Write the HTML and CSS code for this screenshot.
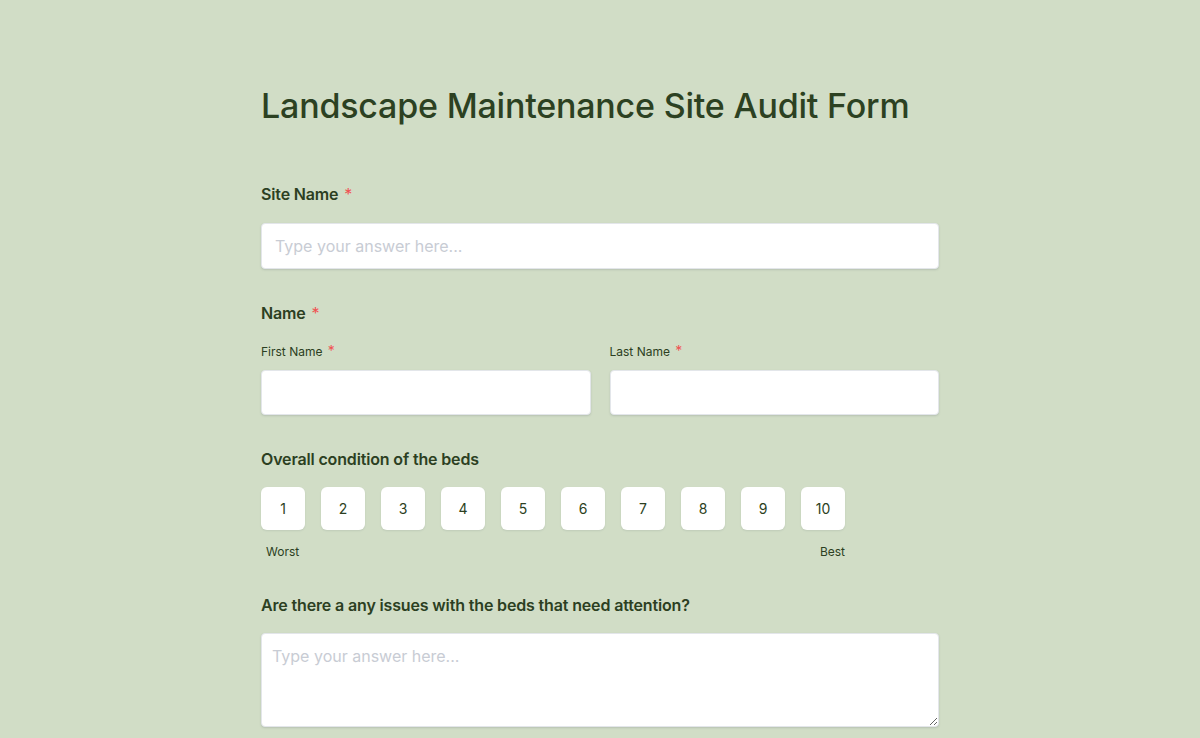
FILE: index.html
```html
<!DOCTYPE html>
<html>
<head>
<meta charset="utf-8">
<link rel="stylesheet" href="styles.css">
</head>
<body>
<main class="form">
  <h1 class="title">Landscape Maintenance Site Audit Form</h1>

  <section class="field">
    <label class="label">Site Name <span class="req">*</span></label>
    <input class="input" type="text" placeholder="Type your answer here...">
  </section>

  <section class="field">
    <label class="label">Name <span class="req">*</span></label>
    <div class="name-row">
      <div class="sub">
        <label class="sublabel">First Name <span class="req">*</span></label>
        <input class="input" type="text">
      </div>
      <div class="sub">
        <label class="sublabel">Last Name <span class="req">*</span></label>
        <input class="input" type="text">
      </div>
    </div>
  </section>

  <section class="field rating-field">
    <label class="label">Overall condition of the beds</label>
    <div class="scale">
      <div class="boxes">
        <button class="box">1</button>
        <button class="box">2</button>
        <button class="box">3</button>
        <button class="box">4</button>
        <button class="box">5</button>
        <button class="box">6</button>
        <button class="box">7</button>
        <button class="box">8</button>
        <button class="box">9</button>
        <button class="box">10</button>
      </div>
      <div class="ends"><span>Worst</span><span>Best</span></div>
    </div>
  </section>

  <section class="field">
    <label class="label">Are there a any issues with the beds that need attention?</label>
    <textarea class="textarea" placeholder="Type your answer here..."></textarea>
  </section>
</main>
</body>
</html>
```
FILE: styles.css
```css
html, body {
  margin: 0;
  padding: 0;
  background: #d1ddc6;
}
body {
  font-family: Inter, "Noto Sans", sans-serif;
  color: #2c3f22;
}
.form {
  width: 678px;
  margin: 0 auto;
  padding-top: 85px;
  display: flex;
  flex-direction: column;
}
.title {
  margin: 0 0 56px;
  font-size: 34px;
  line-height: 41px;
  font-weight: 500;
  color: #2c4122;
  letter-spacing: -0.2px;
  white-space: nowrap;
}
.field {
  display: flex;
  flex-direction: column;
  margin-bottom: 32px;
}
.label {
  display: block;
  font-size: 16px;
  line-height: 24px;
  font-weight: 600;
  color: #2c3f22;
  margin-bottom: 17px;
  letter-spacing: -0.15px;
}
.req {
  color: #f05252;
  font-weight: 400;
  margin-left: 2px;
}
.sublabel {
  display: block;
  font-size: 12px;
  line-height: 18px;
  color: #2c3f22;
  margin-bottom: 9px;
}
.sublabel .req { font-size: 14px; }
.input, .textarea {
  box-sizing: border-box;
  width: 100%;
  background: #fff;
  border: 1px solid #e3e6ea;
  border-radius: 4px;
  box-shadow: 0 1px 2px rgba(60, 70, 90, 0.18);
  font-family: Inter, "Noto Sans", sans-serif;
  font-size: 16px;
  color: #2c3f22;
  outline: none;
}
.input {
  height: 46px;
  padding: 0 13px;
}
.textarea {
  height: 94px;
  padding: 12px 10px;
  resize: vertical;
  display: block;
}
.input::placeholder, .textarea::placeholder {
  color: #c8ccd4;
}
.name-row {
  display: grid;
  grid-template-columns: 1fr 1fr;
  gap: 19px;
}
.name-row .input { height: 45px; }
.rating-field .label { margin-bottom: 16px; }
.scale {
  display: inline-flex;
  flex-direction: column;
  align-self: flex-start;
}
.boxes {
  display: flex;
  gap: 16px;
}
.box {
  width: 44px;
  height: 43px;
  background: #fff;
  border: none;
  border-radius: 6px;
  box-shadow: 0 1px 2px rgba(60, 70, 90, 0.12);
  font-family: Inter, "Noto Sans", sans-serif;
  font-size: 14px;
  color: #2c3f22;
  padding: 0;
}
.ends {
  display: flex;
  justify-content: space-between;
  font-size: 12px;
  line-height: 18px;
  margin-top: 13px;
  padding: 0 0 0 5px;
}
.field:last-child .label { margin-bottom: 16px; }
```
